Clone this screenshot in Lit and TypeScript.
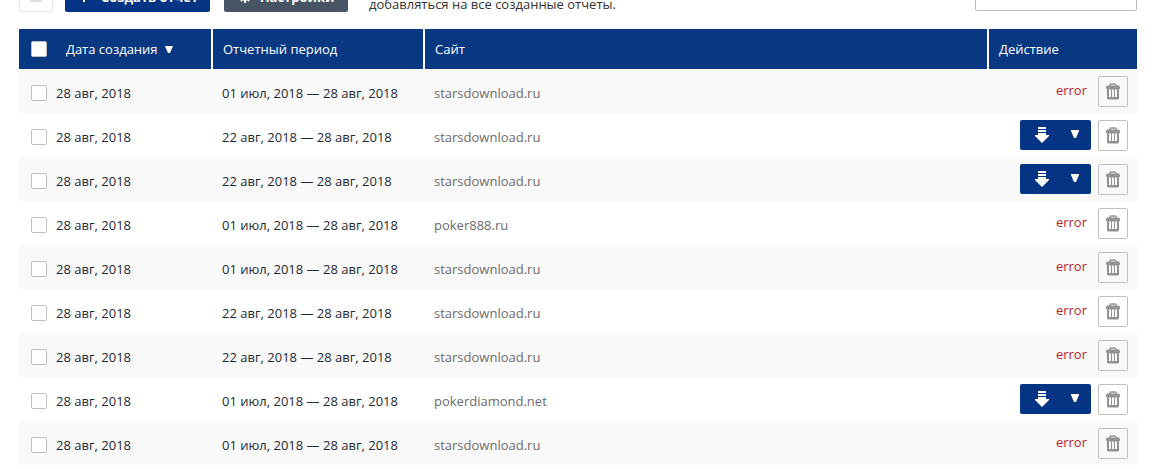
import { LitElement, html, css, svg } from "lit";
import { customElement, state } from "lit/decorators.js";

interface Report {
  created: string;
  period: string;
  site: string;
  ready: boolean;
}

const JULY = "01 июл, 2018 — 28 авг, 2018";
const AUGUST = "22 авг, 2018 — 28 авг, 2018";
const CREATED = "28 авг, 2018";

const REPORTS: Report[] = [
  { created: CREATED, period: JULY, site: "starsdownload.ru", ready: false },
  { created: CREATED, period: AUGUST, site: "starsdownload.ru", ready: true },
  { created: CREATED, period: AUGUST, site: "starsdownload.ru", ready: true },
  { created: CREATED, period: JULY, site: "poker888.ru", ready: false },
  { created: CREATED, period: JULY, site: "starsdownload.ru", ready: false },
  { created: CREATED, period: AUGUST, site: "starsdownload.ru", ready: false },
  { created: CREATED, period: AUGUST, site: "starsdownload.ru", ready: false },
  { created: CREATED, period: JULY, site: "pokerdiamond.net", ready: true },
  { created: CREATED, period: JULY, site: "starsdownload.ru", ready: false },
];

const trashIcon = html`<svg width="14" height="17" viewBox="0 0 14 17" aria-hidden="true">
  ${svg`<path d="M4 3V2L5 1H9L10 2V3" fill="none" stroke="#929292" stroke-width="1.500"/>
  <path d="M1 2.500H13L14 3.500V6H0V3.500Z" fill="#929292"/>
  <path fill-rule="evenodd" fill="#929292" d="M1 6H13V15.500L12 16.500H2L1 15.500ZM3 6.500V14H5V6.500ZM6 6.500V14H8V6.500ZM9 6.500V14H11V6.500Z"/>`}
</svg>`;

const downloadIcon = html`<svg width="14" height="16" viewBox="0 0 14 16" aria-hidden="true">
  <path d="M3 0H11V2H3ZM3 3H11V5H3ZM3 6H11V8H14V9L7 16L0 9V8H3Z" fill="#fff" />
</svg>`;

const caretIcon = html`<svg width="8" height="8" viewBox="0 0 8 8" aria-hidden="true">
  <path d="M0 0H8V1L5 8H3L0 1Z" fill="#fff" />
</svg>`;

const sortIcon = html`<svg width="8" height="7" viewBox="0 0 8 7" aria-hidden="true">
  <path d="M0 0H8L5 7H3Z" fill="#fff" />
</svg>`;

@customElement("app-root")
export class AppRoot extends LitElement {
  static styles = css`
    :host {
      display: block;
      overflow: hidden;
      padding: 0 35px 4px 19px;
      background: #fff;
      color: #1f2a36;
      font: 400 13px/20px "Open Sans", "Noto Sans", sans-serif;
    }
    * {
      box-sizing: border-box;
    }
    button {
      display: flex;
      align-items: center;
      justify-content: center;
      margin: 0;
      padding: 0;
      border: 0;
      border-radius: 2px;
      font: inherit;
      cursor: pointer;
    }
    .toolbar {
      display: flex;
      align-items: flex-end;
      height: 30px;
      margin: -18px 1px 17px 0;
    }
    .select {
      width: 34px;
      height: 30px;
      flex: none;
      border: 1px solid #e9e9e9;
      background: #fff;
    }
    .mark {
      width: 12px;
      height: 12px;
      border-radius: 2px;
      margin-bottom: 2px;
      background: #ddd;
    }
    .create,
    .settings {
      height: 30px;
      flex: none;
      gap: 12px;
      padding-left: 2px;
      color: #fff;
      font-weight: 700;
    }
    .create {
      width: 145px;
      margin-left: 12px;
      background: #043483;
    }
    .settings {
      width: 124px;
      margin-left: 14px;
      gap: 8px;
      padding: 0;
      background: #465463;
    }
    .note {
      flex: 1;
      margin: 0 0 -2px 21px;
      color: #333;
    }
    .search {
      width: 162px;
      height: 30px;
      padding: 0 10px;
      border: 1px solid #bbb;
      border-radius: 2px;
      margin-bottom: 1px;
      background: #fff;
      font: inherit;
    }
    .reports {
      width: 100%;
      table-layout: fixed;
      border-collapse: separate;
      border-spacing: 0;
    }
    .date {
      width: 194px;
    }
    .period {
      width: 212px;
    }
    .action {
      width: 149px;
    }
    th {
      height: 40px;
      padding: 0 10px;
      border-right: 2px solid #fff;
      background: #093883;
      color: #fff;
      font-weight: 400;
      text-align: left;
    }
    th:last-child {
      border-right-width: 1px;
    }
    td {
      height: 44px;
      padding: 4px 10px 0 9px;
      white-space: nowrap;
    }
    tbody tr:nth-child(odd) {
      background: #f9f9f9;
    }
    th:first-child,
    td:first-child {
      padding-left: 12px;
    }
    .pick {
      display: flex;
      align-items: center;
      gap: 9px;
    }
    .pick.all {
      gap: 19px;
    }
    .tick {
      appearance: none;
      flex: none;
      width: 16px;
      height: 16px;
      margin: 0;
      border: 1px solid #bfbfbf;
      border-radius: 2px;
      background: #fff;
    }
    .tick:checked {
      background: #043483;
      box-shadow: inset 0 0 0 3px #fff;
    }
    .sort {
      gap: 7px;
      background: none;
      color: #fff;
    }
    .site {
      color: #6c6c6c;
    }
    .actions {
      display: flex;
      align-items: flex-start;
      justify-content: flex-end;
      gap: 7px;
      padding-bottom: 3px;
    }
    .error {
      margin-right: 4px;
      padding-top: 4px;
      color: #b9262c;
    }
    .split {
      display: flex;
    }
    .download,
    .more {
      height: 30px;
      background: #043483;
    }
    .download {
      width: 44px;
      border-radius: 2px 0 0 2px;
    }
    .more {
      width: 27px;
      padding: 0 5px 2px 0;
      border-radius: 0 2px 2px 0;
    }
    .remove {
      width: 30px;
      height: 31px;
      border: 1px solid #bfbfbf;
      background: transparent;
    }
  `;

  @state() private picked = new Set<number>();

  private toggle(index: number) {
    const next = new Set(this.picked);
    if (!next.delete(index)) next.add(index);
    this.picked = next;
  }

  private toggleAll() {
    this.picked =
      this.picked.size === REPORTS.length
        ? new Set()
        : new Set(REPORTS.map((_, index) => index));
  }

  private renderRow(report: Report, index: number) {
    return html`<tr>
      <td>
        <label class="pick">
          <input
            class="tick"
            type="checkbox"
            .checked=${this.picked.has(index)}
            @change=${() => this.toggle(index)}
          />
          <span>${report.created}</span>
        </label>
      </td>
      <td>${report.period}</td>
      <td class="site">${report.site}</td>
      <td>
        <div class="actions">
          ${report.ready
            ? html`<div class="split">
                <button class="download" aria-label="Скачать">${downloadIcon}</button>
                <button class="more" aria-label="Форматы">${caretIcon}</button>
              </div>`
            : html`<span class="error">error</span>`}
          <button class="remove" aria-label="Удалить">${trashIcon}</button>
        </div>
      </td>
    </tr>`;
  }

  render() {
    return html`
      <div class="toolbar">
        <button class="select" aria-label="Выбрать" @click=${this.toggleAll}>
          <span class="mark"></span>
        </button>
        <button class="create">
          <svg width="10" height="10" viewBox="0 0 10 10" aria-hidden="true">
            <path d="M4 0H6V4H10V6H6V10H4V6H0V4H4Z" fill="#fff" />
          </svg>
          Создать отчет
        </button>
        <button class="settings">
          <svg width="14" height="14" viewBox="0 0 14 14" aria-hidden="true">
            <circle cx="7" cy="7" r="3" fill="none" stroke="#fff" stroke-width="2" />
            <path
              d="M7 1V3M7 11V13M1 7H3M11 7H13M3 3L4 4M10 10L11 11M11 3L10 4M4 10L3 11"
              stroke="#fff"
              stroke-width="2"
            />
          </svg>
          Настройки
        </button>
        <p class="note">добавляться на все созданные отчеты.</p>
        <input class="search" type="search" aria-label="Поиск" />
      </div>
      <table class="reports">
        <colgroup>
          <col class="date" />
          <col class="period" />
          <col />
          <col class="action" />
        </colgroup>
        <thead>
          <tr>
            <th scope="col">
              <div class="pick all">
                <input
                  class="tick"
                  type="checkbox"
                  aria-label="Выбрать все"
                  .checked=${this.picked.size === REPORTS.length}
                  @change=${this.toggleAll}
                />
                <button class="sort">Дата создания ${sortIcon}</button>
              </div>
            </th>
            <th scope="col">Отчетный период</th>
            <th scope="col">Сайт</th>
            <th scope="col">Действие</th>
          </tr>
        </thead>
        <tbody>
          ${REPORTS.map((report, index) => this.renderRow(report, index))}
        </tbody>
      </table>
    `;
  }
}
